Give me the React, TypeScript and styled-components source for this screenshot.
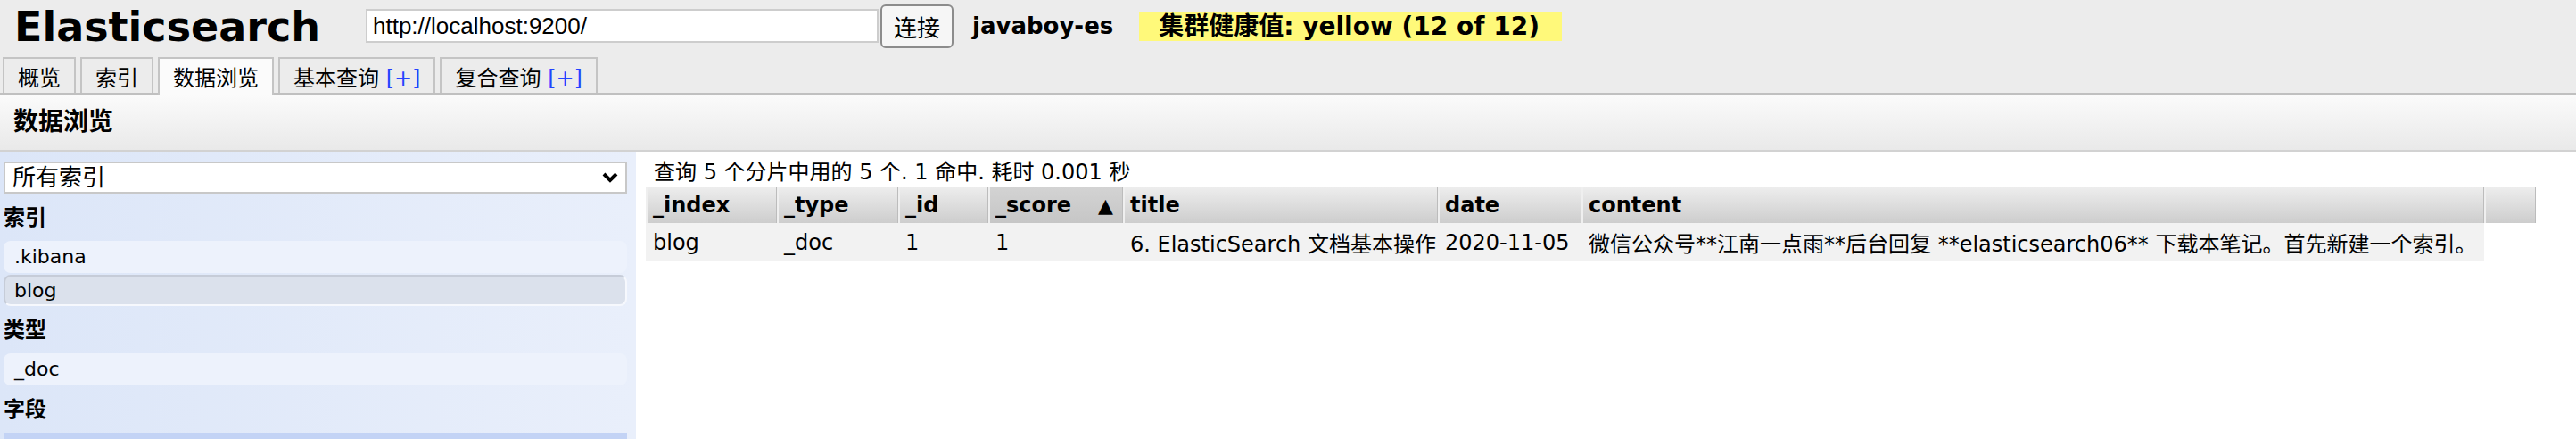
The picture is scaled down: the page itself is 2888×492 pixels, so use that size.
import React from 'react';
import styled, { createGlobalStyle } from 'styled-components';

const GlobalStyle = createGlobalStyle`
	html, body {
		margin: 0;
		padding: 0;
		background: #fff;
	}
	body {
		font-family: "DejaVu Sans", "Noto Sans CJK SC", sans-serif;
		color: #000;
	}
	* {
		box-sizing: border-box;
	}
`;

const Page = styled.div`
	min-height: 100vh;
	display: flex;
	flex-direction: column;
`;

const TopBar = styled.div`
	background: #ececec;
	border-bottom: 2px solid #c0c0c0;
`;

const HeaderRow = styled.div`
	display: flex;
	align-items: center;
	height: 58px;
	padding-left: 16px;
`;

const Logo = styled.h1`
	margin: 2px 0 0;
	width: 394px;
	flex: none;
	font-size: 46px;
	line-height: 46px;
	font-weight: bold;
`;

const UrlInput = styled.input`
	width: 575px;
	height: 38px;
	border: 2px solid #cdcdcd;
	padding: 0 6px;
	background: #fff;
	font-family: "Liberation Sans", Arial, sans-serif;
	font-size: 26px;
	color: #000;
	outline: none;
`;

const ConnectButton = styled.button`
	margin-left: 2px;
	width: 82px;
	height: 49px;
	padding: 0;
	border: 2px solid #8c8c8c;
	border-radius: 6px;
	background: #f6f6f6;
	font-family: "Noto Sans CJK SC", sans-serif;
	font-size: 26px;
	color: #000;
`;

const ClusterName = styled.span`
	margin-left: 21px;
	font-size: 26px;
	font-weight: bold;
	white-space: nowrap;
`;

const healthColors: Record<string, string> = {
	green: '#99ff99',
	yellow: '#fff97a',
	red: '#ff9999',
};

const Health = styled.span<{ $status: string }>`
	margin-left: 29px;
	height: 33px;
	padding: 0 25px 0 22px;
	line-height: 33px;
	font-size: 28px;
	font-weight: bold;
	white-space: nowrap;
	background: ${(p) => healthColors[p.$status]};
`;

const TabBar = styled.div`
	display: flex;
	gap: 5px;
	height: 40px;
	margin-top: 6px;
	padding-left: 3px;
`;

const Tab = styled.div<{ $active?: boolean }>`
	position: relative;
	z-index: ${(p) => (p.$active ? 1 : 0)};
	height: ${(p) => (p.$active ? 42 : 40)}px;
	margin-bottom: ${(p) => (p.$active ? -2 : 0)}px;
	padding: 6px 15px 0;
	border: 2px solid #c4c4c4;
	border-bottom: none;
	background: ${(p) => (p.$active ? '#fbfbfb' : '#ececec')};
	font-size: 24px;
	line-height: 32px;
	white-space: nowrap;
`;

const TabPlus = styled.span`
	color: #2443ff;
`;

const SectionHeader = styled.h2`
	margin: 0;
	height: 64px;
	padding-left: 15px;
	border-bottom: 2px solid #d2d2d2;
	background: linear-gradient(#fbfbfb, #e9e9e9);
	font-size: 28px;
	line-height: 62px;
	font-weight: bold;
`;

const Main = styled.div`
	flex: 1;
	display: flex;
`;

const Sidebar = styled.div`
	width: 713px;
	flex: none;
	padding: 11px 10px 0 4px;
	background: linear-gradient(90deg, #dce6f8, #e9effb);
`;

const SelectBox = styled.div`
	display: flex;
	align-items: center;
	justify-content: space-between;
	height: 36px;
	padding: 0 7px 0 8px;
	border: 2px solid #c8c8c8;
	background: #fff;
	font-size: 26px;
	line-height: 32px;
`;

const SideLabel = styled.div`
	margin: 13px 0 12px;
	font-size: 24px;
	line-height: 28px;
	font-weight: bold;
`;

const SideList = styled.div`
	display: flex;
	flex-direction: column;
	gap: 2px;
`;

const SideItem = styled.div<{ $selected?: boolean }>`
	height: ${(p) => (p.$selected ? 35 : 36)}px;
	padding-left: 10px;
	border: 2px solid;
	border-color: ${(p) => (p.$selected ? '#c6ccd8 #f6f8fd #f6f8fd #c6ccd8' : 'transparent')};
	border-radius: 8px;
	background: ${(p) => (p.$selected ? '#dbe1ec' : '#edf2fc')};
	font-size: 22px;
	line-height: 31px;
`;

const FieldBar = styled.div`
	height: 30px;
	background: #c3d3f5;
`;

const Results = styled.div`
	flex: 1;
	padding: 9px 0 0 11px;
	background: #fff;
`;

const Summary = styled.div`
	margin-bottom: 3px;
	padding-left: 9px;
	font-size: 24px;
	line-height: 28px;
	white-space: nowrap;
`;

const Table = styled.table`
	border-collapse: separate;
	border-spacing: 0;
	table-layout: fixed;
	width: 2119px;
	font-size: 24px;
`;

const Col = styled.col<{ $width: number }>`
	width: ${(p) => p.$width}px;
`;

const HeadCell = styled.th<{ $sorted?: boolean }>`
	height: 40px;
	padding: 0 8px 0 6px;
	border-left: 2px solid #efefef;
	border-right: 1px solid #bcbcbc;
	background: ${(p) => (p.$sorted ? 'linear-gradient(#d3d3d3, #c6c6c6)' : 'linear-gradient(#ededed, #cdcdcd)')};
	text-align: left;
	font-weight: bold;
	white-space: nowrap;
`;

const HeadInner = styled.div`
	display: flex;
	align-items: center;
	justify-content: space-between;
`;

const SortArrow = styled.span`
	margin-right: 2px;
	font-size: 22px;
`;

const Cell = styled.td`
	height: 43px;
	padding: 0 8px;
	background: #f2f2f2;
	white-space: nowrap;
	overflow: hidden;
`;

const columns = [
	{ key: '_index', width: 147 },
	{ key: '_type', width: 136 },
	{ key: '_id', width: 101 },
	{ key: '_score', width: 151 },
	{ key: 'title', width: 353 },
	{ key: 'date', width: 161 },
	{ key: 'content', width: 1012 },
];

const rows = [
	{
		_index: 'blog',
		_type: '_doc',
		_id: '1',
		_score: '1',
		title: '6. ElasticSearch 文档基本操作',
		date: '2020-11-05',
		content: '微信公众号**江南一点雨**后台回复 **elasticsearch06** 下载本笔记。首先新建一个索引。',
	},
];

const tabs = [
	{ label: '概览' },
	{ label: '索引' },
	{ label: '数据浏览', active: true },
	{ label: '基本查询', plus: true },
	{ label: '复合查询', plus: true },
];

const Chevron = () => (
	<svg width="20" height="14" viewBox="0 0 20 14">
		<path d="M3 3 L10 10 L17 3" fill="none" stroke="#000" strokeWidth="4" />
	</svg>
);

const App = () => {
	return <Page>
		<GlobalStyle />
		<TopBar>
			<HeaderRow>
				<Logo>Elasticsearch</Logo>
				<UrlInput defaultValue="http://localhost:9200/" />
				<ConnectButton>连接</ConnectButton>
				<ClusterName>javaboy-es</ClusterName>
				<Health $status="yellow">集群健康值: yellow (12 of 12)</Health>
			</HeaderRow>
			<TabBar>
				{tabs.map((t) => (
					<Tab key={t.label} $active={t.active}>
						{t.label}
						{t.plus && <> <TabPlus>[+]</TabPlus></>}
					</Tab>
				))}
			</TabBar>
		</TopBar>
		<SectionHeader>数据浏览</SectionHeader>
		<Main>
			<Sidebar>
				<SelectBox>
					<span>所有索引</span>
					<Chevron />
				</SelectBox>
				<SideLabel>索引</SideLabel>
				<SideList>
					<SideItem>.kibana</SideItem>
					<SideItem $selected>blog</SideItem>
				</SideList>
				<SideLabel>类型</SideLabel>
				<SideList>
					<SideItem>_doc</SideItem>
				</SideList>
				<SideLabel>字段</SideLabel>
				<FieldBar />
			</Sidebar>
			<Results>
				<Summary>查询 5 个分片中用的 5 个. 1 命中. 耗时 0.001 秒</Summary>
				<Table>
					<colgroup>
						{columns.map((c) => <Col key={c.key} $width={c.width} />)}
						<Col $width={58} />
					</colgroup>
					<thead>
						<tr>
							{columns.map((c) => (
								<HeadCell key={c.key} $sorted={c.key === '_score'}>
									<HeadInner>
										<span>{c.key}</span>
										{c.key === '_score' && <SortArrow>▲</SortArrow>}
									</HeadInner>
								</HeadCell>
							))}
							<HeadCell />
						</tr>
					</thead>
					<tbody>
						{rows.map((r, i) => (
							<tr key={i}>
								{columns.map((c) => <Cell key={c.key}>{r[c.key as keyof typeof r]}</Cell>)}
							</tr>
						))}
					</tbody>
				</Table>
			</Results>
		</Main>
	</Page>;
};

export default App;
